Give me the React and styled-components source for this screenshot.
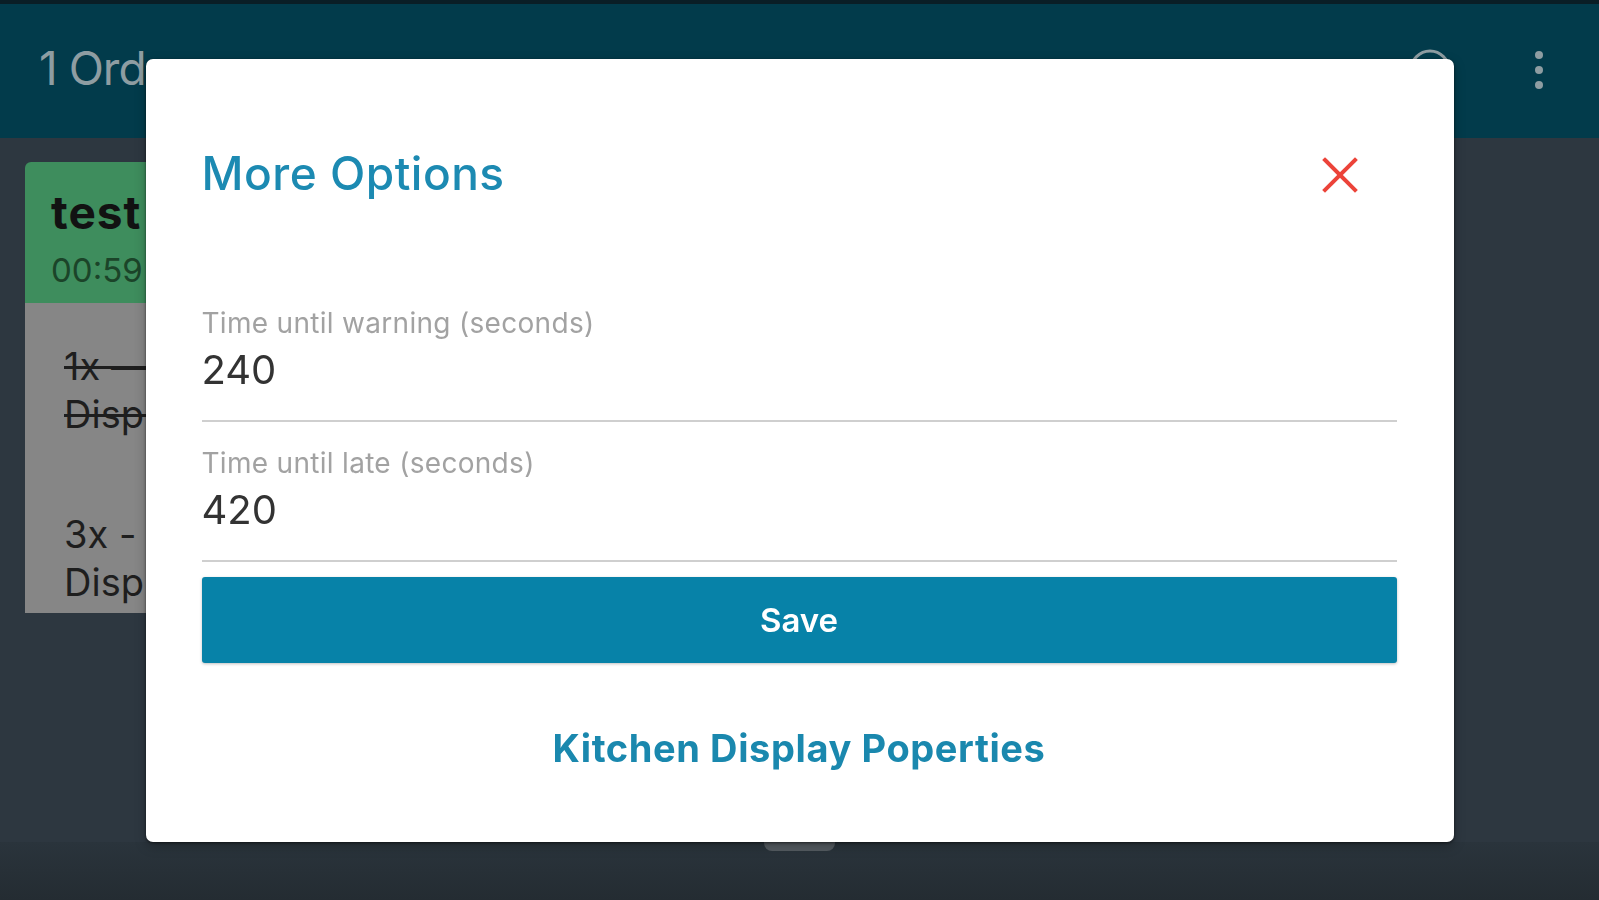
import React from "react";
import styled, { createGlobalStyle } from "styled-components";

const Global = createGlobalStyle`
  html, body { margin: 0; padding: 0; }
  body {
    width: 1599px;
    height: 900px;
    overflow: hidden;
    font-family: Inter, Roboto, "Noto Sans", "Liberation Sans", sans-serif;
    background: #2d3740;
  }
  * { box-sizing: border-box; }
`;

const Page = styled.div`
  width: 1599px;
  height: 900px;
  display: flex;
  flex-direction: column;
  background: #2d3740;
`;

const TopStrip = styled.div`
  height: 4px;
  background: #0a1e26;
`;

const AppBar = styled.header`
  height: 134px;
  background: #023b4b;
  display: flex;
  align-items: center;
  padding: 0 55px 0 39px;
`;

const AppTitle = styled.div`
  flex: 1;
  font-size: 46px;
  line-height: 46px;
  letter-spacing: -1px;
  color: #8e9da2;
  margin-top: -6px;
`;

const IconSlot = styled.div`
  display: flex;
  align-items: center;
  justify-content: center;
  color: #8e9da2;
  margin-left: ${(p) => p.$gap || 0}px;
  margin-top: ${(p) => p.$dy || 0}px;
`;

const Main = styled.main`
  flex: 1;
  display: flex;
  align-items: flex-start;
  padding: 24px 25px 0;
`;

const Card = styled.section`
  width: 200px;
  border-radius: 6px 6px 0 0;
  overflow: hidden;
`;

const CardHead = styled.div`
  background: #3e8d5d;
  height: 141px;
  padding: 27px 0 0 26px;
  white-space: nowrap;
`;

const CardName = styled.div`
  font-size: 46px;
  line-height: 46px;
  letter-spacing: 1px;
  font-weight: 700;
  color: #121212;
`;

const CardTime = styled.div`
  margin-top: 19px;
  font-size: 33px;
  line-height: 33px;
  color: #1b4429;
`;

const CardBody = styled.div`
  background: #868686;
  height: 310px;
  padding: 39px 0 0 39px;
  white-space: nowrap;
`;

const Item = styled.div`
  font-size: 38px;
  line-height: 48px;
  color: #1e1e1e;
  text-decoration: ${(p) => (p.$done ? "line-through" : "none")};
  margin-bottom: ${(p) => p.$mb || 0}px;
`;

const Footer = styled.footer`
  height: 58px;
  display: flex;
  justify-content: center;
  background: linear-gradient(#2a343c, #242c32);
`;

const Handle = styled.div`
  width: 71px;
  height: 9px;
  border-radius: 0 0 8px 8px;
  background: #545b61;
`;

const Overlay = styled.div`
  position: fixed;
  inset: 0;
  display: flex;
  align-items: center;
  justify-content: center;
`;

const Modal = styled.div`
  width: 1308px;
  background: #ffffff;
  border-radius: 7px;
  box-shadow: 0 1px 3px rgba(0, 0, 0, 0.55), 0 4px 12px rgba(0, 0, 0, 0.25);
  padding: 92px 57px 75px 56px;
  display: flex;
  flex-direction: column;
`;

const TitleRow = styled.div`
  display: flex;
  align-items: center;
  justify-content: space-between;
  height: 45px;
  margin-bottom: 110px;
`;

const Title = styled.h2`
  margin: 0;
  font-size: 46px;
  line-height: 45px;
  letter-spacing: 0.5px;
  font-weight: 500;
  color: #1c8ab2;
`;

const CloseButton = styled.button`
  border: 0;
  padding: 0;
  background: none;
  display: flex;
  margin-right: 39px;
  margin-top: 4px;
  cursor: pointer;
`;

const Field = styled.div`
  display: flex;
  flex-direction: column;
  margin-bottom: ${(p) => p.$mb || 0}px;
`;

const Label = styled.div`
  font-size: 28px;
  line-height: 34px;
  letter-spacing: 0.3px;
  color: #a2a2a2;
`;

const Value = styled.div`
  margin-top: 6px;
  font-size: 40px;
  line-height: 48px;
  color: #333333;
  padding-bottom: 26px;
  border-bottom: 2px solid #cfcfcf;
`;

const SaveButton = styled.button`
  margin-top: 15px;
  height: 86px;
  border: 0;
  border-radius: 3px;
  background: #0782a8;
  color: #ffffff;
  font-family: inherit;
  font-size: 33px;
  font-weight: 600;
  box-shadow: 0 1px 3px rgba(0, 0, 0, 0.25);
  cursor: pointer;
`;

const LinkButton = styled.button`
  margin-top: 66px;
  border: 0;
  padding: 0;
  background: none;
  font-family: inherit;
  font-size: 38px;
  line-height: 38px;
  letter-spacing: 0.6px;
  font-weight: 700;
  color: #1a88ae;
  align-self: center;
  cursor: pointer;
`;

const SearchIcon = () => (
  <svg width="54" height="54" viewBox="0 0 54 54" fill="none">
    <circle cx="24" cy="24" r="19" stroke="currentColor" strokeWidth="3" />
    <line x1="38" y1="38" x2="46" y2="46" stroke="currentColor" strokeWidth="4" strokeLinecap="round" />
  </svg>
);

const KebabIcon = () => (
  <svg width="10" height="40" viewBox="0 0 10 40" fill="currentColor">
    <circle cx="5" cy="5" r="4" />
    <circle cx="5" cy="20" r="4" />
    <circle cx="5" cy="35" r="4" />
  </svg>
);

const CloseIcon = () => (
  <svg width="36" height="36" viewBox="0 0 36 36" fill="none">
    <line x1="3" y1="3" x2="33" y2="33" stroke="#ec4339" strokeWidth="4" strokeLinecap="square" />
    <line x1="33" y1="3" x2="3" y2="33" stroke="#ec4339" strokeWidth="4" strokeLinecap="square" />
  </svg>
);

export default function App() {
  return (
    <>
      <Global />
      <Page>
        <TopStrip />
        <AppBar>
          <AppTitle>1 Order</AppTitle>
          <IconSlot $dy={4}>
            <SearchIcon />
          </IconSlot>
          <IconSlot $gap={74} $dy={-2}>
            <KebabIcon />
          </IconSlot>
        </AppBar>
        <Main>
          <Card>
            <CardHead>
              <CardName>test</CardName>
              <CardTime>00:59</CardTime>
            </CardHead>
            <CardBody>
              <Item $done $mb={72}>
                1x —
                <br />
                Display
              </Item>
              <Item>
                3x -
                <br />
                Display
              </Item>
            </CardBody>
          </Card>
        </Main>
        <Footer>
          <Handle />
        </Footer>
      </Page>
      <Overlay>
        <Modal>
          <TitleRow>
            <Title>More Options</Title>
            <CloseButton aria-label="Close">
              <CloseIcon />
            </CloseButton>
          </TitleRow>
          <Field $mb={24}>
            <Label>Time until warning (seconds)</Label>
            <Value>240</Value>
          </Field>
          <Field>
            <Label>Time until late (seconds)</Label>
            <Value>420</Value>
          </Field>
          <SaveButton>Save</SaveButton>
          <LinkButton>Kitchen Display Poperties</LinkButton>
        </Modal>
      </Overlay>
    </>
  );
}
